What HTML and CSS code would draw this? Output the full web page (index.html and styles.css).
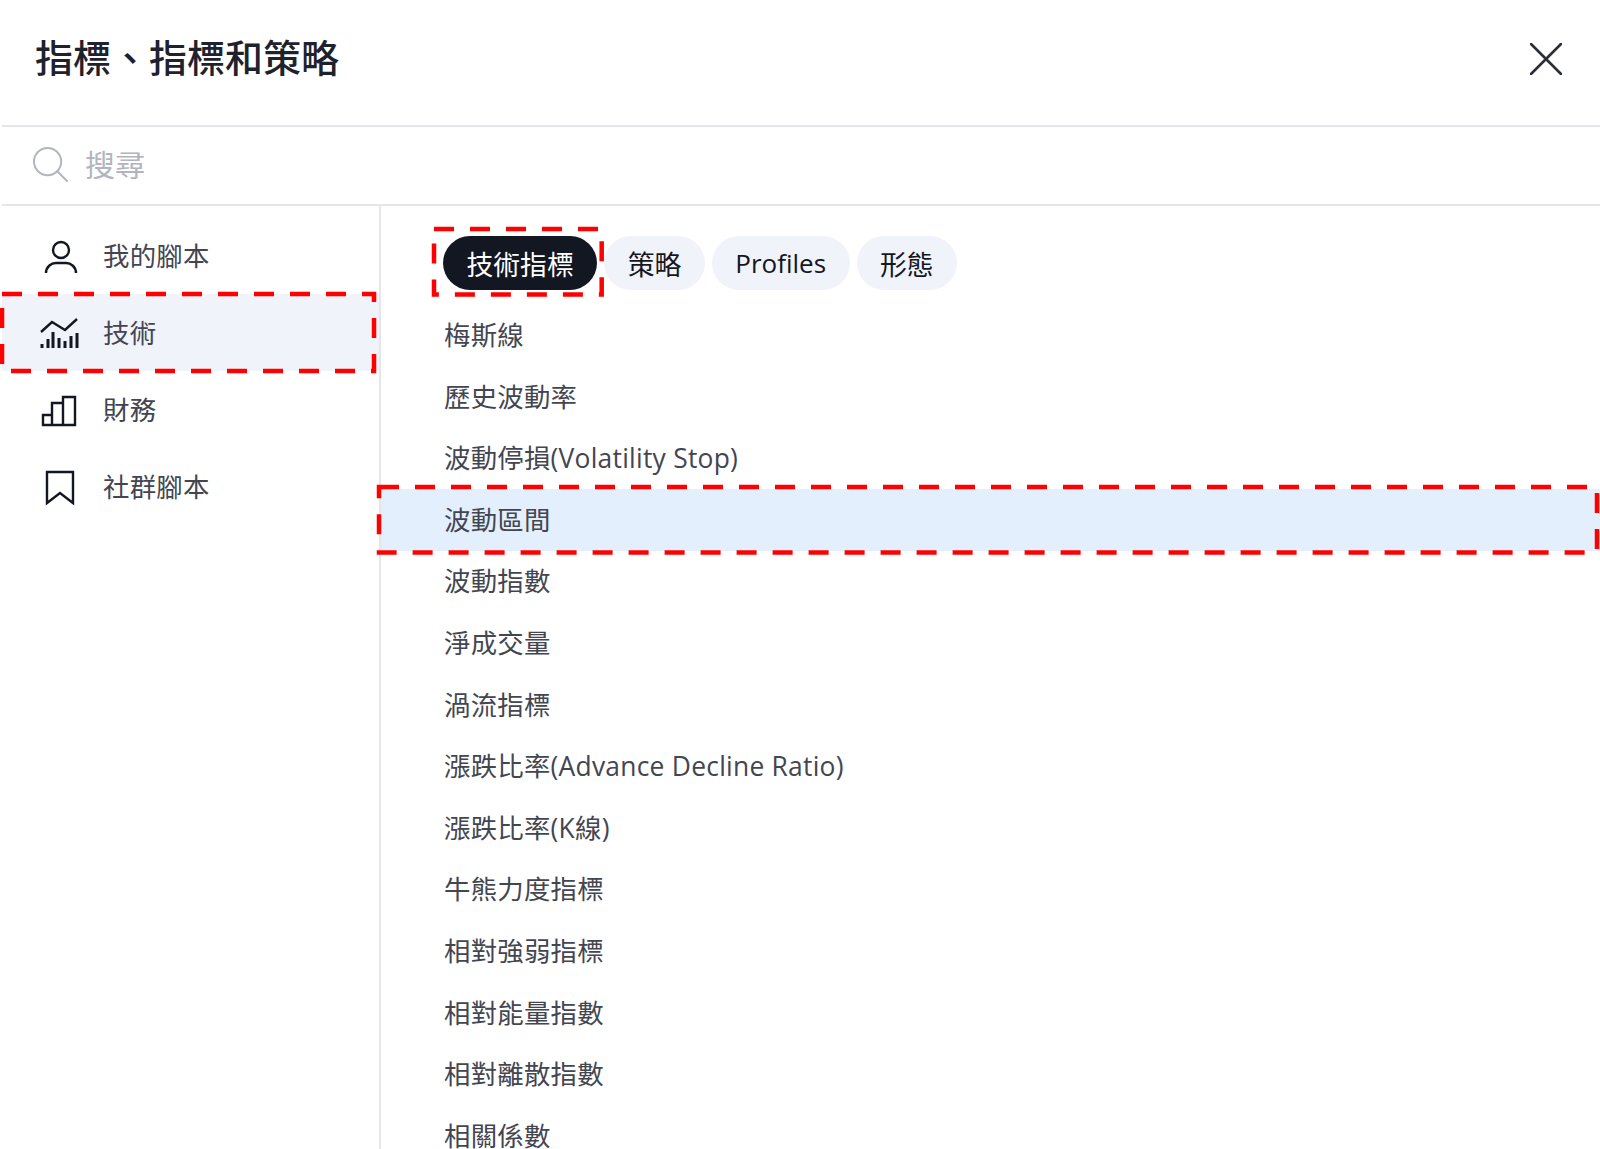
FILE: index.html
```html
<!DOCTYPE html>
<html lang="zh-Hant">
<head>
<meta charset="utf-8">
<title>指標、指標和策略</title>
<link rel="stylesheet" href="styles.css">
</head>
<body>
<div class="dialog">
  <header class="head">
    <h1 class="title">指標、指標和策略</h1>
    <svg class="close" viewBox="0 0 32 32"><path d="M1 1 31 31M31 1 1 31"/></svg>
  </header>
  <div class="search">
    <svg class="search-icon" viewBox="0 0 36 36"><circle cx="15" cy="15" r="14"/><path d="M25 25 35 35"/></svg>
    <span class="search-text">搜尋</span>
  </div>
  <div class="body">
    <nav class="side">
      <div class="side-item">
        <svg class="ico" viewBox="0 0 40 40"><circle cx="21" cy="14" r="8"/><path d="M6 37c0-6 5-10 10-10h10c5 0 10 4 10 10"/></svg>
        <span>我的腳本</span>
      </div>
      <div class="side-item on">
        <svg class="ico" viewBox="0 0 40 40"><path d="M1 19 12 9 25 17 37 6"/><path class="bars" d="M2 35v-4M8 35v-9M13 35V19M19 35V25M25 35v-7M31 35V23M37 35V20"/></svg>
        <span>技術</span>
        <svg class="mark mark-side"><rect width="100%" height="100%"/></svg>
      </div>
      <div class="side-item">
        <svg class="ico" viewBox="0 0 40 40"><path d="M3 25h9v10H3zM12 13h11v22H12zM23 7h12v28H23z"/></svg>
        <span>財務</span>
      </div>
      <div class="side-item">
        <svg class="ico" viewBox="0 0 40 40"><path d="M7 5H33V36L20 26 7 36Z"/></svg>
        <span>社群腳本</span>
      </div>
    </nav>
    <main class="main">
      <div class="tabs">
        <div class="tab active">技術指標<svg class="mark mark-tab"><rect width="100%" height="100%"/></svg></div>
        <div class="tab">策略</div>
        <div class="tab latin">Profiles</div>
        <div class="tab">形態</div>
      </div>
      <ul class="list">
        <li class="row">梅斯線</li>
        <li class="row">歷史波動率</li>
        <li class="row">波動停損(Volatility Stop)</li>
        <li class="row sel">波動區間<svg class="mark mark-row"><rect width="100%" height="100%"/></svg></li>
        <li class="row">波動指數</li>
        <li class="row">淨成交量</li>
        <li class="row">渦流指標</li>
        <li class="row">漲跌比率(Advance Decline Ratio)</li>
        <li class="row">漲跌比率(K線)</li>
        <li class="row">牛熊力度指標</li>
        <li class="row">相對強弱指標</li>
        <li class="row">相對能量指數</li>
        <li class="row">相對離散指數</li>
        <li class="row">相關係數</li>
      </ul>
    </main>
  </div>
</div>
</body>
</html>
```
FILE: styles.css
```css
* { box-sizing: border-box; }
html, body { margin: 0; height: 100%; overflow: hidden; background: #fff; }
body {
  font-family: "Open Sans", "Noto Sans CJK TC", sans-serif;
  color: #434651;
}
.dialog { height: 1149px; padding-left: 2px; display: flex; flex-direction: column; }
.head {
  height: 127px; flex: none;
  display: flex; align-items: center; justify-content: space-between;
  padding: 0 38px 12px 33px;
  border-bottom: 2px solid #e4e6ec;
}
.title { margin: 0; font-size: 38px; line-height: 50px; font-weight: 500; color: #1e222d; }
.close { width: 32px; height: 32px; margin-top: 4px; fill: none; stroke: #2a2e39; stroke-width: 2.6; stroke-linecap: round; }
.search {
  height: 79px; flex: none;
  display: flex; align-items: center; gap: 17px;
  padding: 0 0 2px 31px;
  border-bottom: 2px solid #e4e6ec;
}
.search-icon { width: 35px; height: 35px; fill: none; stroke: #b2b5be; stroke-width: 2; stroke-linecap: round; }
.search-text { font-size: 30px; color: #b2b5be; margin-bottom: 4px; }
.body { flex: 1; display: flex; min-height: 0; }
.side { width: 379px; flex: none; padding-top: 11px; border-right: 2px solid #e4e6ec; }
.side-item {
  position: relative; height: 77px;
  display: flex; align-items: center; gap: 23px;
  padding-left: 38px;
  font-size: 26.4px; letter-spacing: 0.25px;
}
.side-item > span { margin-bottom: 2px; }
.side-item.on { background: #f0f3fa; }
.ico { width: 40px; height: 40px; flex: none; fill: none; stroke: #131722; stroke-width: 2.4; }
.ico .bars { stroke-width: 3; }
.main { flex: 1; min-width: 0; padding: 30px 0 0; }
.tabs { display: flex; gap: 7px; padding-left: 62px; }
.tab {
  position: relative; height: 54px; padding: 0 23.5px;
  display: flex; align-items: center;
  border-radius: 27px; background: #f0f3fa;
  font-size: 26.8px; color: #131722;
}
.tab.latin { font-size: 26px; }
.tab.active { background: #131722; color: #fff; }
.list { list-style: none; margin: 14.2px 0 0; padding: 0; }
.row {
  position: relative; height: 61.6px; padding: 0 0 3px 63px;
  display: flex; align-items: center;
  font-size: 26.4px; letter-spacing: 0.25px; white-space: nowrap;
}
.row.sel { background: #e3effd; }
.mark {
  position: absolute; overflow: visible; pointer-events: none;
  fill: none; stroke: #f00; stroke-width: 4.5; stroke-dasharray: 20 16;
}
.mark-side { top: 0; left: -0.5px; width: calc(100% - 5px); height: 100%; }
.mark-tab { top: -7.5px; left: -9.5px; width: calc(100% + 13.5px); height: calc(100% + 11.5px); }
.mark-row { top: -2px; left: -2px; width: calc(100% - 1px); height: calc(100% + 4px); }
```
